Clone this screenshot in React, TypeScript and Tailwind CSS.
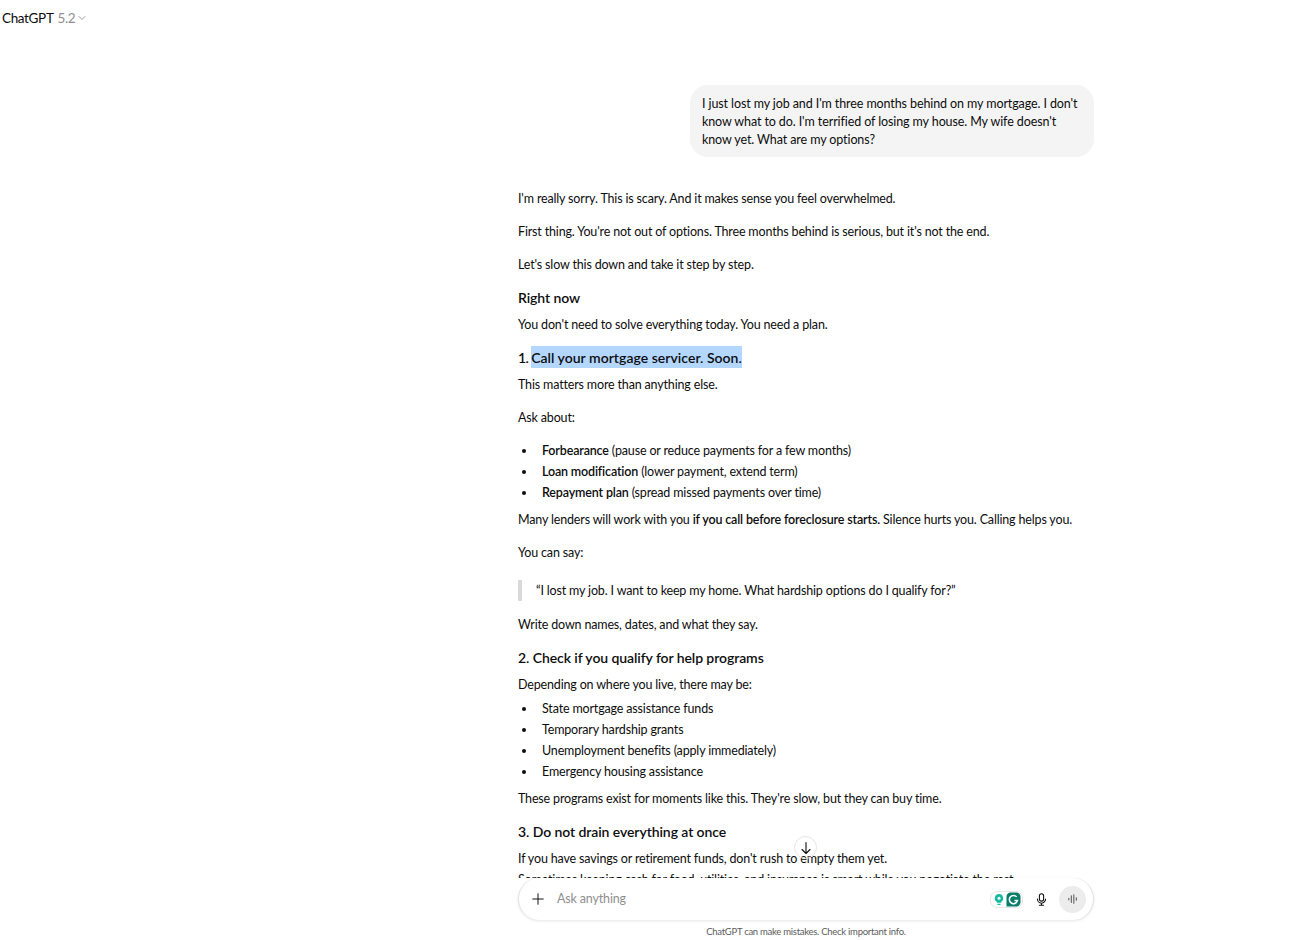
import { ChevronDown, Plus } from "lucide-react";

function P({ children, cls = "mb-3" }: { children: React.ReactNode; cls?: string }) {
  return <p className={`leading-[21px] whitespace-nowrap ${cls}`}>{children}</p>;
}
function H({ children, cls = "" }: { children: React.ReactNode; cls?: string }) {
  return <h3 className={`font-semibold text-[14px] tracking-[-0.08px] leading-[21px] mt-[3px] mb-[6px] ${cls}`}>{children}</h3>;
}
function Li({ children }: { children: React.ReactNode }) {
  return (
    <li className="flex h-[21px] items-center leading-[21px]">
      <span className="w-[24px] pl-[4px] shrink-0 flex items-center"><span className="w-[4px] h-[4px] rounded-full bg-[#0d0d0d]" /></span>
      <span>{children}</span>
    </li>
  );
}

export default function App() {
  return (
    <div className="relative h-[940px] w-[1312px] overflow-hidden bg-white text-[#0d0d0d] text-[12.5px] tracking-[-0.16px] font-['Lato',sans-serif] flex flex-col">
      <header className="h-[36px] pl-[2px] flex items-center shrink-0 text-[13.5px] tracking-[-0.35px]">
        <span>ChatGPT</span>
        <span className="ml-[4px] text-[#8f8f8f]">5.2</span>
        <ChevronDown className="ml-[1px] w-[12px] h-[12px] text-[#9a9a9a]" />
      </header>
      <main className="flex-1 min-h-0 overflow-hidden pl-[518px] pt-[49px]">
        <div className="w-[576px]">
          <div className="flex justify-end mb-[31px]">
            <div className="w-[404px] h-[72px] rounded-[18px] bg-[#f4f4f4] px-[12px] py-[10px] leading-[18px] tracking-[-0.1px] whitespace-nowrap">
              I just lost my job and I'm three months behind on my mortgage. I don't<br />
              know what to do. I'm terrified of losing my house. My wife doesn't<br />
              know yet. What are my options?
            </div>
          </div>
          <P>I'm really sorry. This is scary. And it makes sense you feel overwhelmed.</P>
          <P>First thing. You're not out of options. Three months behind is serious, but it's not the end.</P>
          <P>Let's slow this down and take it step by step.</P>
          <H>Right now</H>
          <P>You don't need to solve everything today. You need a plan.</P>
          <H><span className="tracking-[-0.6px]">1. </span><span className="bg-[#b4d7ff] pt-[3px] pb-[2px] tracking-[0.03px]">Call your mortgage servicer. Soon.</span></H>
          <P>This matters more than anything else.</P>
          <P>Ask about:</P>
          <ul className="mb-[6px]">
            <Li><b className="font-semibold">Forbearance</b> (pause or reduce payments for a few months)</Li>
            <Li><b className="font-semibold">Loan modification</b> (lower payment, extend term)</Li>
            <Li><b className="font-semibold">Repayment plan</b> (spread missed payments over time)</Li>
          </ul>
          <P>Many lenders will work with you <b className="font-semibold">if you call before foreclosure starts.</b> Silence hurts you. Calling helps you.</P>
          <P cls="mb-[17px]">You can say:</P>
          <blockquote className="border-l-[4px] border-[#d9d9d9] rounded-[1px] pl-[14px] mb-[13px] leading-[21px]">
            “I lost my job. I want to keep my home. What hardship options do I qualify for?”
          </blockquote>
          <P>Write down names, dates, and what they say.</P>
          <H>2. Check if you qualify for help programs</H>
          <P cls="mb-[3px]">Depending on where you live, there may be:</P>
          <ul className="mb-[6px]">
            <Li>State mortgage assistance funds</Li>
            <Li>Temporary hardship grants</Li>
            <Li>Unemployment benefits (apply immediately)</Li>
            <Li>Emergency housing assistance</Li>
          </ul>
          <P>These programs exist for moments like this. They're slow, but they can buy time.</P>
          <H>3. Do not drain everything at once</H>
          <P>
            If you have savings or retirement funds, don't rush to empty them yet.<br />
            Sometimes keeping cash for food, utilities, and insurance is smart while you negotiate the rest.
          </P>
        </div>
      </main>
      <button className="absolute left-[794px] top-[836px] w-[23px] h-[23px] rounded-full border border-[#e5e5e5] flex items-center justify-center">
        <svg viewBox="0 0 16 16" className="w-[16px] h-[16px]" fill="none" stroke="#0d0d0d" strokeWidth="1.1" strokeLinecap="round" strokeLinejoin="round">
          <path d="M8 2.5v11M4 9.5l4 4 4-4" />
        </svg>
      </button>
      <footer className="shrink-0 pl-[518px] h-[62px]">
        <div className="w-[576px] h-[42px] rounded-[21px] bg-white border-l border-r border-[#e2e2e2] shadow-[0_1px_3px_rgba(0,0,0,0.10)] flex items-center pl-[10px] pr-[7px]">
          <Plus className="w-[18px] h-[18px] text-[#0d0d0d]" strokeWidth={1.3} />
          <span className="ml-[10px] text-[#8f8f8f]">Ask anything</span>
          <div className="ml-auto flex items-center">
            <div className="w-[33px] h-[17px] rounded-[7px] border border-[#e6e6e6] flex items-center justify-between pl-[3px] pr-[1px]">
              <svg viewBox="0 0 12 14" className="w-[10px] h-[13px]">
                <path d="M6 0.5a5 5 0 0 0-3 9l.6 1.5h4.8L9 9.5a5 5 0 0 0-3-9z" fill="#15b8a0" />
                <circle cx="6" cy="5.5" r="1.8" fill="#ffffff" />
                <rect x="4" y="12" width="4" height="1.5" rx=".7" fill="#15b8a0" />
              </svg>
              <svg viewBox="0 0 16 16" className="w-[15px] h-[15px]">
                <path d="M5 0.5h6a4.5 4.5 0 0 1 4.5 4.5v6a4.5 4.5 0 0 1-4.5 4.5H0.5V5A4.5 4.5 0 0 1 5 .5z" fill="#0a7d68" />
                <path d="M11.4 5.2A4.4 4.4 0 1 0 12.3 9H9" fill="none" stroke="#fff" strokeWidth="1.6" />
              </svg>
            </div>
            <svg viewBox="0 0 16 16" className="ml-[12px] w-[13px] h-[13px]" fill="none" stroke="#0d0d0d" strokeWidth="1.3" strokeLinecap="round">
              <rect x="5.4" y="1" width="5.2" height="9" rx="2.6" />
              <path d="M3 7.5a5 5 0 0 0 10 0M8 12.5V15M5.5 15h5" />
            </svg>
            <div className="ml-[11px] w-[27px] h-[27px] rounded-full bg-[#ececec] flex items-center justify-center">
              <svg viewBox="0 0 14 12" className="w-[12px] h-[10px]" stroke="#5d5d5d" strokeWidth="1.3" strokeLinecap="round">
                <path d="M2 5v2M5 2v8M8 1v10M11 4.5v3" />
              </svg>
            </div>
          </div>
        </div>
        <div className="w-[576px] h-[20px] flex items-center justify-center text-[9.5px] tracking-[-0.27px] text-[#5d5d5d] pt-[4px]">
          ChatGPT can make mistakes. Check important info.
        </div>
      </footer>
    </div>
  );
}
